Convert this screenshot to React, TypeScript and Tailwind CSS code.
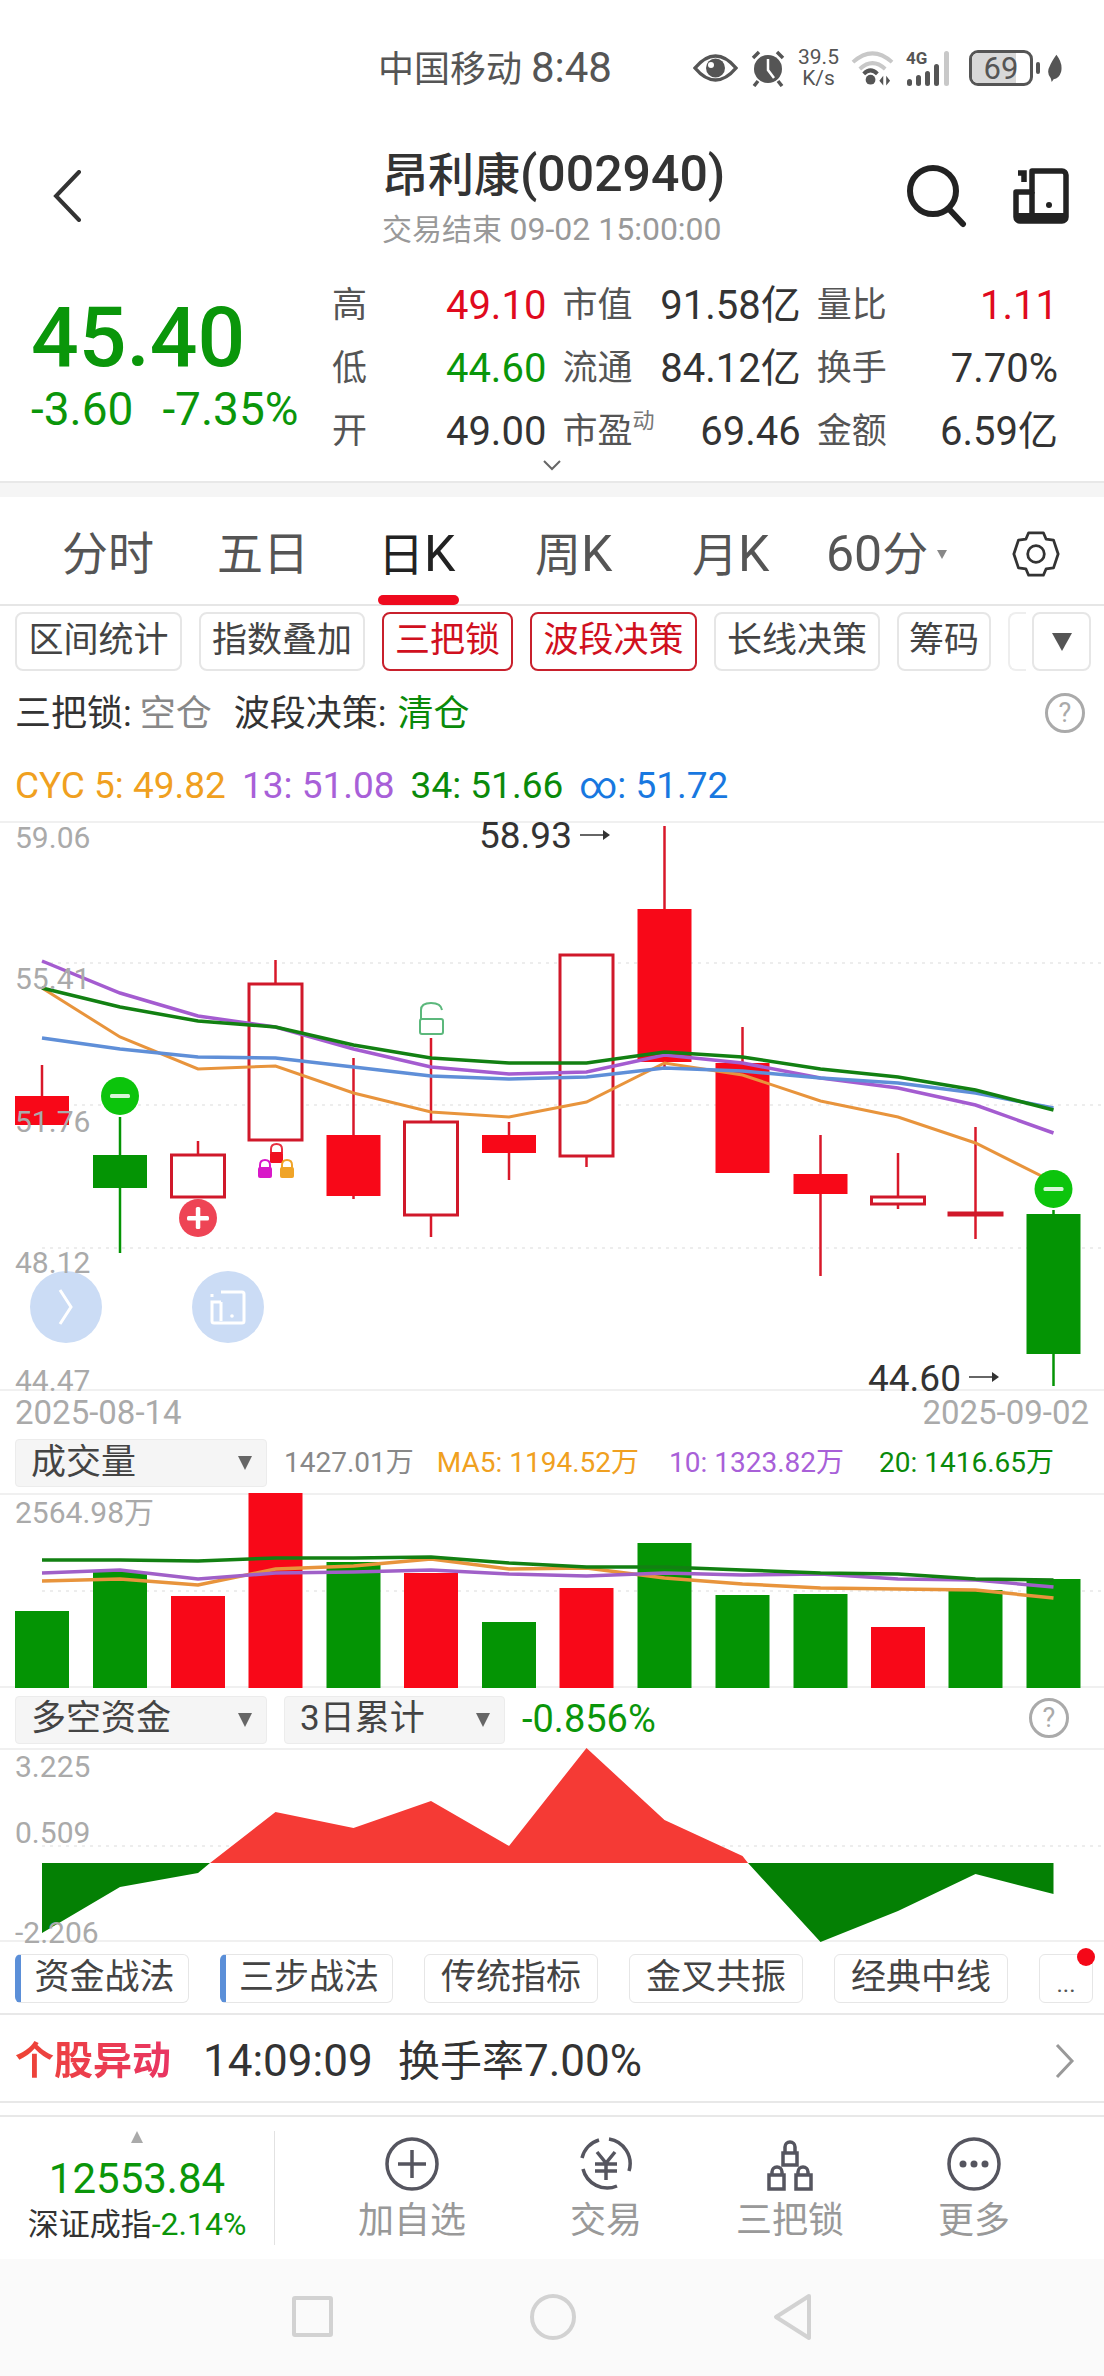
import type { ReactNode } from 'react'

const RED = '#f80818'
const GREEN = '#049404'
const centers = [42, 120, 198, 275.5, 353.5, 431, 509, 586.5, 664.5, 742.5, 820.5, 898, 975.5, 1053.5]

// wick top, body top, body bottom, wick bottom, style
type Candle = [number, number, number, number, 'r' | 'g' | 'h']
const candles: Candle[] = [
  [1065, 1096, 1125, 1125, 'r'],
  [1117, 1155, 1188, 1253, 'g'],
  [1141, 1155, 1197, 1197, 'h'],
  [960, 984, 1140, 1140, 'h'],
  [1058, 1135, 1196, 1199, 'r'],
  [1038, 1122, 1215, 1237, 'h'],
  [1122, 1135, 1153, 1180, 'r'],
  [954, 955, 1156, 1167, 'h'],
  [826, 909, 1062, 1067, 'r'],
  [1027, 1063, 1173, 1173, 'r'],
  [1135, 1174, 1194, 1276, 'r'],
  [1153, 1197, 1204, 1209, 'h'],
  [1127, 1213, 1215, 1239, 'h'],
  [1210, 1214, 1354, 1386, 'g'],
]

const maPurple = [961, 993, 1016, 1027, 1049, 1067, 1074, 1072, 1055, 1063, 1078, 1088, 1105, 1133]
const maGreen = [988, 1007, 1021, 1027, 1045, 1058, 1063, 1063, 1052, 1057, 1069, 1077, 1090, 1110]
const maBlue = [1038, 1049, 1057, 1058, 1067, 1076, 1079, 1077, 1068, 1071, 1078, 1083, 1093, 1108]
const maOrange = [988, 1037, 1069, 1066, 1093, 1112, 1117, 1102, 1063, 1075, 1101, 1117, 1143, 1182]

const volTops = [1611, 1572, 1596, 1493, 1562, 1573, 1622, 1588, 1543, 1595, 1594, 1627, 1590, 1579]
const volColors = 'ggrrgrgrggg' + 'rgg'
const volGreen = [1560, 1560, 1561, 1558, 1558, 1557, 1563, 1567, 1567, 1570, 1573, 1574, 1579, 1580]
const volPurple = [1573, 1570, 1579, 1573, 1572, 1570, 1574, 1576, 1573, 1575, 1574, 1579, 1580, 1587]
const volOrange = [1581, 1579, 1585, 1569, 1566, 1559, 1569, 1568, 1578, 1584, 1588, 1589, 1590, 1598]

const pts = (ys: number[]) => ys.map((y, i) => `${centers[i]},${y}`).join(' ')

function CandleChart() {
  return (
    <svg className="absolute left-0 top-[-2px]" width="1104" height="570" viewBox="0 821 1104 570">
      {[963, 1105, 1248].map((y) => (
        <line key={y} x1="42" x2="1104" y1={y} y2={y} stroke="#e8e8e8" strokeWidth="1.5" strokeDasharray="3 5" />
      ))}
      {candles.map(([wt, bt, bb, wb, kind], i) => {
        const x = centers[i]
        const color = kind === 'g' ? GREEN : kind === 'r' ? RED : '#d0182a'
        return (
          <g key={i}>
            <line x1={x} x2={x} y1={wt} y2={wb} stroke={kind === 'g' ? GREEN : '#d8182a'} strokeWidth="2.5" />
            {kind === 'h' ? (
              <rect x={x - 26.5} y={bt} width="53" height={bb - bt} fill="#fff" stroke={color} strokeWidth="3" />
            ) : (
              <rect x={x - 27} y={bt} width="54" height={bb - bt} fill={color} />
            )}
          </g>
        )
      })}
      <polyline points={pts(maOrange)} fill="none" stroke="#e8943c" strokeWidth="3" />
      <polyline points={pts(maPurple)} fill="none" stroke="#a45cd0" strokeWidth="3.5" />
      <polyline points={pts(maBlue)} fill="none" stroke="#5f8fd8" strokeWidth="3.5" />
      <polyline points={pts(maGreen)} fill="none" stroke="#128012" strokeWidth="3.5" />

      <circle cx="120" cy="1096" r="19" fill="#0cc40c" />
      <rect x="110" y="1094" width="20" height="4" rx="1.5" fill="#d8f5d8" />
      <circle cx="1053.5" cy="1189" r="19" fill="#0cc40c" />
      <rect x="1043.5" y="1187" width="20" height="4" rx="1.5" fill="#d8f5d8" />
      <circle cx="198" cy="1218" r="19" fill="#ee4455" />
      <rect x="187" y="1216" width="22" height="4.5" rx="1.5" fill="#fff" />
      <rect x="195.8" y="1207" width="4.5" height="22" rx="1.5" fill="#fff" />

      <path d="M421 1019v-9q0-7 10-7q10 0 11 7" fill="none" stroke="#5cb87c" strokeWidth="2" />
      <rect x="420" y="1019" width="23" height="15" rx="2" fill="none" stroke="#5cb87c" strokeWidth="2" />
      <path d="M271 1153v-4q0-5 5.500-5q5.500 0 5.500 5v4" fill="none" stroke="#e83040" strokeWidth="2" />
      <rect x="270" y="1152" width="13" height="11" rx="1.5" fill="#f01020" />
      <path d="M260 1168v-3q0-5 5-5q5 0 5 5v3" fill="none" stroke="#d818c8" strokeWidth="2" />
      <rect x="258" y="1167" width="14" height="11" rx="2" fill="#d818c8" />
      <path d="M282 1168v-3q0-5 5-5q5 0 5 5v3" fill="none" stroke="#f0a428" strokeWidth="2" />
      <rect x="280" y="1167" width="14" height="11" rx="2" fill="#f0a428" />

      <path d="M580 835h24" fill="none" stroke="#333" strokeWidth="1.5" />
      <path d="M603 830l7 5l-7 5z" fill="#333" />
      <path d="M969 1377h24" fill="none" stroke="#333" strokeWidth="1.5" />
      <path d="M992 1372l7 5l-7 5z" fill="#333" />

      <circle cx="66" cy="1307" r="36" fill="#cbdcf5" />
      <path d="M60 1290l11 17l-11 17" fill="none" stroke="#fff" strokeWidth="3" />
      <circle cx="228" cy="1307" r="36" fill="#cbdcf5" />
      <path d="M221 1292h21a2 2 0 0 1 2 2v27a2 2 0 0 1-2 2h-28a2 2 0 0 1-2-2v-19h9m0 0v19m-9-27v3" fill="none" stroke="#fff" strokeWidth="3" />
      <circle cx="232" cy="1316" r="1.8" fill="#fff" />
    </svg>
  )
}

function VolumeChart() {
  return (
    <svg className="absolute left-0 top-[-2px]" width="1104" height="195" viewBox="0 1493 1104 195">
      <line x1="42" x2="1104" y1="1591" y2="1591" stroke="#e8e8e8" strokeWidth="1.5" strokeDasharray="3 5" />
      {volTops.map((t, i) => (
        <rect key={i} x={centers[i] - 27} y={t} width="54" height={1688 - t} fill={volColors[i] === 'g' ? GREEN : RED} />
      ))}
      <polyline points={pts(volOrange)} fill="none" stroke="#e8943c" strokeWidth="3.5" />
      <polyline points={pts(volPurple)} fill="none" stroke="#a060c8" strokeWidth="3.5" />
      <polyline points={pts(volGreen)} fill="none" stroke="#128012" strokeWidth="3.5" />
    </svg>
  )
}

function FundChart() {
  const zero = 1863
  const c = centers
  return (
    <svg className="absolute left-0 top-[-2px]" width="1104" height="194" viewBox="0 1748 1104 194">
      <line x1="42" x2="1104" y1="1846" y2="1846" stroke="#e8e8e8" strokeWidth="1.5" strokeDasharray="3 5" />
      <polygon
        fill="#f53a35"
        points={`210,${zero} ${c[3]},1812 ${c[4]},1828 ${c[5]},1801 ${c[6]},1846 ${c[7]},1748 ${c[8]},1820 ${c[9]},1856 748,${zero}`}
      />
      <polygon fill="#048004" points={`${c[0]},${zero} 210,${zero} ${c[2]},1873 ${c[1]},1887 ${c[0]},1933`} />
      <polygon
        fill="#048004"
        points={`748,${zero} ${c[13]},${zero} ${c[13]},1894 ${c[12]},1874 ${c[11]},1911 ${c[10]},1942`}
      />
    </svg>
  )
}

function AxisLabel({ top, children }: { top: number; children: ReactNode }) {
  return (
    <span style={{ top }} className="absolute left-[15px] whitespace-nowrap text-[30px] leading-[34px] text-[#aaaaaa]">
      {children}
    </span>
  )
}

function Caret() {
  return <span className="h-0 w-0 border-x-[7px] border-t-[14px] border-x-transparent border-t-[#666666]" />
}

function Select({ label, width }: { label: string; width: string }) {
  return (
    <div className={`flex h-[48px] items-center justify-between rounded-[4px] border border-[#ececec] bg-[#f5f5f5] pl-[15px] pr-[14px] text-[35px] text-[#444444] ${width}`}>
      <span>{label}</span>
      <Caret />
    </div>
  )
}

function Help({ className }: { className: string }) {
  return (
    <span className={`flex h-[40px] w-[40px] items-center justify-center rounded-full border-[3px] border-[#aaaaaa] text-[27px] leading-none text-[#aaaaaa] ${className}`}>
      ?
    </span>
  )
}

function ToolTag({ label, active, width }: { label: string; active?: boolean; width: string }) {
  return (
    <div
      className={`flex h-[59px] items-center justify-center rounded-[8px] border-2 text-[35px] ${width} ${
        active ? 'border-[#c8202c] text-[#d0101e]' : 'border-[#e6e6e6] text-[#444444]'
      }`}
    >
      {label}
    </div>
  )
}

function FundTag({ label, marked, width }: { label: string; marked?: boolean; width: string }) {
  return (
    <div
      className={`flex h-[49px] items-center justify-center rounded-[6px] border border-[#e6e6e6] text-[35px] text-[#444444] ${width} ${
        marked ? 'border-l-[6px] border-l-[#5b8fd8]' : ''
      }`}
    >
      {label}
    </div>
  )
}

function StatRow({ label, value, valueColor, width }: { label: ReactNode; value: string; valueColor?: string; width: string }) {
  return (
    <div className={`flex items-center justify-between ${width}`}>
      <span className="text-[35px] leading-[44px] text-[#555555]">{label}</span>
      <span className={`text-[40px] leading-[44px] ${valueColor ?? 'text-[#333333]'}`}>{value}</span>
    </div>
  )
}

function StatusIcons() {
  return (
    <div className="flex items-center text-[#555555]">
      <svg width="45" height="30" viewBox="0 0 45 30">
        <path d="M2 15Q12 3 22.5 3T43 15Q33 27 22.5 27T2 15Z" fill="none" stroke="#555" strokeWidth="3.5" />
        <circle cx="22.5" cy="15" r="9.5" fill="#555" />
        <circle cx="18" cy="12" r="3" fill="#fff" />
      </svg>
      <svg width="36" height="38" viewBox="0 0 36 38" className="ml-[12px]">
        <circle cx="18" cy="20" r="14" fill="#555" />
        <path d="M18 10v11l6 8" fill="none" stroke="#fff" strokeWidth="2.5" />
        <path d="M3 9l6-6M33 9l-6-6M8 32l-4 5M28 32l4 5" stroke="#555" strokeWidth="3.5" />
      </svg>
      <div className="ml-[12px] flex w-[41px] flex-col items-center text-[21px] leading-[21px]">
        <span>39.5</span>
        <span>K/s</span>
      </div>
      <svg width="43" height="36" viewBox="0 0 44 36" className="ml-[12px]">
        <path d="M2 12Q22 -6 42 12M9 19Q22 7 35 19" fill="none" stroke="#c8c8c8" strokeWidth="4" />
        <path d="M13 24Q20 17 27 24" fill="none" stroke="#555" strokeWidth="4" />
        <circle cx="20" cy="30" r="5" fill="#555" />
        <path d="M33 26l-4 5l4 5zM36 26l4 5l-4 5z" fill="#555" />
      </svg>
      <div className="relative ml-[12px] h-[38px] w-[50px]">
        <span className="absolute left-0 top-[-1px] text-[17px] font-bold leading-[20px]">4G</span>
        <svg width="50" height="38" viewBox="0 0 50 38" className="absolute inset-0">
          <rect x="1" y="30" width="5" height="7" rx="2.5" fill="#555" />
          <rect x="10" y="26" width="5" height="11" rx="2.5" fill="#555" />
          <rect x="19" y="22" width="5" height="15" rx="2.5" fill="#555" />
          <rect x="28" y="15" width="5" height="22" rx="2.5" fill="#555" />
          <rect x="38" y="2" width="5" height="35" rx="2.5" fill="#c8c8c8" />
        </svg>
      </div>
      <div className="relative ml-[13px] flex h-[36px] w-[64px] items-center justify-center overflow-hidden rounded-[9px] border-[3px] border-[#555555]">
        <span className="absolute inset-y-0 left-0 w-[44px] bg-[#d8d8d8]" />
        <span className="relative text-[31px] leading-none">69</span>
      </div>
      <span className="ml-[3px] h-[12px] w-[4px] rounded-full bg-[#555555]" />
      <svg width="16" height="30" viewBox="0 0 17 30" className="ml-[7px]">
        <path d="M10 1Q17 10 15 19Q13 26 7 27L5 30L4 26Q-1 20 3 13Q5 8 10 1Z" fill="#555" />
      </svg>
    </div>
  )
}

export default function App() {
  return (
    <div className="flex h-[2376px] w-[1104px] flex-col overflow-hidden bg-white text-[#333333] [font-family:Roboto,'Noto_Sans_CJK_SC',sans-serif]">
      {/* status bar */}
      <div className="flex h-[100px] shrink-0 items-center pl-[378px] pr-[41px] pt-[36px]">
        <span className="h-[64px] whitespace-nowrap text-[36px] leading-[64px] text-[#555555]">
          中国移动 <span className="text-[42px]">8:48</span>
        </span>
        <div className="ml-auto"><StatusIcons /></div>
      </div>

      {/* header */}
      <div className="flex h-[160px] shrink-0 items-start pt-[45px]">
        <svg width="30" height="52" viewBox="0 0 30 52" className="ml-[52px] mt-[25px]">
          <path d="M27 2L4 26l23 24" fill="none" stroke="#333" strokeWidth="4" strokeLinecap="round" />
        </svg>
        <div className="ml-[300px] flex w-[342px] flex-col">
          <span className="whitespace-nowrap text-[46px] font-medium leading-[58px] text-[#333333]">
            昂利康<span className="text-[50px]">(002940)</span>
          </span>
          <span className="mt-[5px] whitespace-nowrap text-[30px] leading-[40px] text-[#999999]">
            交易结束 <span className="text-[32px]">09-02 15:00:00</span>
          </span>
        </div>
        <svg width="64" height="64" viewBox="0 0 64 64" className="ml-[181px] mt-[19px]">
          <circle cx="28" cy="27" r="23" fill="none" stroke="#222" strokeWidth="6" />
          <path d="M44 45l14 15" stroke="#222" strokeWidth="6" strokeLinecap="round" />
        </svg>
        <svg width="56" height="56" viewBox="0 0 56 56" className="ml-[44px] mt-[23px]">
          <path d="M19 3h30a4 4 0 0 1 4 4v42a4 4 0 0 1-4 4H7a4 4 0 0 1-4-4V24h16z" fill="none" stroke="#222" strokeWidth="5.5" strokeLinejoin="round" />
          <path d="M19 24v29" stroke="#222" strokeWidth="5.5" />
          <path d="M5 5h6v9" fill="none" stroke="#222" strokeWidth="5.5" />
          <rect x="3" y="45" width="50" height="8" fill="#222" />
          <circle cx="36" cy="37" r="3" fill="#222" />
        </svg>
      </div>

      {/* quote */}
      <div className="relative flex h-[221px] shrink-0">
        <div className="ml-[31px] w-[301px] pt-[28px] text-[#0a960a]">
          <div className="text-[84px] font-medium leading-[100px]">45.40</div>
          <div className="mt-[-4px] whitespace-nowrap text-[46px] leading-[50px]">
            -3.60<span className="ml-[29px]">-7.35%</span>
          </div>
        </div>
        <div className="flex w-[726px] flex-col gap-[19px] pt-[24px]">
          <div className="flex gap-[16px]">
            <StatRow width="w-[215px]" label="高" value="49.10" valueColor="text-[#e00a1e]" />
            <StatRow width="w-[239px]" label="市值" value="91.58亿" />
            <StatRow width="w-[242px]" label="量比" value="1.11" valueColor="text-[#e00a1e]" />
          </div>
          <div className="flex gap-[16px]">
            <StatRow width="w-[215px]" label="低" value="44.60" valueColor="text-[#0a960a]" />
            <StatRow width="w-[239px]" label="流通" value="84.12亿" />
            <StatRow width="w-[242px]" label="换手" value="7.70%" />
          </div>
          <div className="flex gap-[16px]">
            <StatRow width="w-[215px]" label="开" value="49.00" />
            <StatRow
              width="w-[239px]"
              label={
                <span className="flex items-start">
                  市盈<span className="mt-[-2px] text-[22px] leading-[26px] text-[#777777]">动</span>
                </span>
              }
              value="69.46"
            />
            <StatRow width="w-[242px]" label="金额" value="6.59亿" />
          </div>
        </div>
        <svg width="20" height="12" viewBox="0 0 20 12" className="absolute left-[542px] top-[199px]">
          <path d="M2 2l8 8l8-8" fill="none" stroke="#666" strokeWidth="2" />
        </svg>
      </div>
      <div className="h-[16px] shrink-0 border-t-2 border-[#e8e8e8] bg-[#f5f5f5]" />

      {/* period tabs */}
      <div className="flex h-[109px] shrink-0 items-center border-b-2 border-[#e6e6e6] pt-[7px] text-[46px] text-[#555555]">
        <span className="ml-[62px] w-[155px]">分时</span>
        <span className="w-[161px]">五日</span>
        <span className="relative w-[157px] text-[#222222]">
          日<span className="text-[50px]">K</span>
          <span className="absolute left-0 top-[78px] h-[10px] w-[81px] rounded-full bg-[#ee0a1e]" />
        </span>
        <span className="w-[157px]">周<span className="text-[50px]">K</span></span>
        <span className="w-[134px]">月<span className="text-[50px]">K</span></span>
        <span className="flex items-center">
          <span className="text-[50px]">60</span>分
          <span className="ml-[9px] h-0 w-0 border-x-[5px] border-t-[9px] border-x-transparent border-t-[#888888]" />
        </span>
        <svg width="48" height="48" viewBox="0 0 52 52" className="ml-auto mr-[44px]">
          <path d="M18 3h16l3 7l8 1l5 15l-5 15l-8 1l-3 7H18l-3-7l-8-1L2 26l5-15l8-1z" fill="none" stroke="#333" strokeWidth="3" strokeLinejoin="round" />
          <circle cx="26" cy="26" r="9" fill="none" stroke="#333" strokeWidth="3" />
        </svg>
      </div>

      {/* tool tags */}
      <div className="flex h-[74px] shrink-0 items-start pl-[15px] pt-[6px]">
        <div className="flex gap-[17px]">
          <ToolTag width="w-[167px]" label="区间统计" />
          <ToolTag width="w-[166px]" label="指数叠加" />
          <ToolTag width="w-[131px]" label="三把锁" active />
          <ToolTag width="w-[167px]" label="波段决策" active />
          <ToolTag width="w-[166px]" label="长线决策" />
          <ToolTag width="w-[94px]" label="筹码" />
        </div>
        <div className="ml-[17px] h-[59px] w-[18px] rounded-l-[8px] border-2 border-r-0 border-[#eeeeee]" />
        <div className="ml-[6px] flex h-[59px] w-[59px] items-center justify-center rounded-[8px] border-2 border-[#e6e6e6]">
          <span className="h-0 w-0 border-x-[10px] border-t-[18px] border-x-transparent border-t-[#555555]" />
        </div>
      </div>

      {/* signal */}
      <div className="relative flex h-[66px] shrink-0 items-center pt-[2px] pl-[15px] text-[36px] text-[#333333]">
        三把锁: <span className="ml-[8px] text-[#888888]">空仓</span>
        <span className="ml-[22px]">波段决策:</span>
        <span className="ml-[11px] text-[#0a8a0a]">清仓</span>
        <Help className="absolute left-[1045px] top-[13px]" />
      </div>

      {/* ma legend */}
      <div className="flex h-[75px] shrink-0 items-center whitespace-nowrap pl-[15px] pt-[5px] text-[37px]">
        <span className="text-[#f0a020]">CYC 5: 49.82</span>
        <span className="ml-[16px] text-[#a860d8]">13: 51.08</span>
        <span className="ml-[16px] text-[#0a8a0a]">34: 51.66</span>
        <span className="ml-[16px] text-[#1878e0]">∞: 51.72</span>
      </div>

      {/* kline */}
      <div className="relative h-[570px] shrink-0 border-y-2 border-[#f0f0f0]">
        <CandleChart />
        <AxisLabel top={-2}>59.06</AxisLabel>
        <AxisLabel top={139}>55.41</AxisLabel>
        <AxisLabel top={282}>51.76</AxisLabel>
        <AxisLabel top={423}>48.12</AxisLabel>
        <AxisLabel top={541}>44.47</AxisLabel>
        <span className="absolute left-[479px] top-[-8px] text-[37px] leading-[42px] text-[#333333]">58.93</span>
        <span className="absolute left-[868px] top-[535px] text-[37px] leading-[42px] text-[#333333]">44.60</span>
      </div>
      <div className="flex h-[44px] shrink-0 items-center justify-between px-[15px] text-[33px] text-[#aaaaaa]">
        <span>2025-08-14</span>
        <span>2025-09-02</span>
      </div>

      {/* volume */}
      <div className="flex h-[58px] shrink-0 items-center whitespace-nowrap pb-[2px] pl-[15px] text-[28px]">
        <Select width="w-[252px]" label="成交量" />
        <span className="ml-[17px] text-[#888888]">1427.01万</span>
        <span className="ml-[23px] text-[#f0a020]">MA5: 1194.52万</span>
        <span className="ml-[30px] text-[#a860d8]">10: 1323.82万</span>
        <span className="ml-[35px] text-[#0a8a0a]">20: 1416.65万</span>
      </div>
      <div className="relative h-[195px] shrink-0 border-y-2 border-[#f0f0f0]">
        <VolumeChart />
        <AxisLabel top={1}>2564.98万</AxisLabel>
      </div>

      {/* fund flow */}
      <div className="relative flex h-[60px] shrink-0 items-center gap-[17px] pl-[15px] pt-[3px]">
        <Select width="w-[252px]" label="多空资金" />
        <Select width="w-[221px]" label="3日累计" />
        <span className="text-[38px] text-[#0a960a]">-0.856%</span>
        <Help className="absolute left-[1029px] top-[10px]" />
      </div>
      <div className="relative h-[194px] shrink-0 border-y-2 border-[#f0f0f0]">
        <FundChart />
        <AxisLabel top={0}>3.225</AxisLabel>
        <AxisLabel top={66}>0.509</AxisLabel>
        <AxisLabel top={166}>-2.206</AxisLabel>
      </div>
      <div className="relative flex h-[73px] shrink-0 gap-[31px] border-b-2 border-[#e8e8e8] pl-[15px] pt-[12px]">
        <FundTag width="w-[174px]" label="资金战法" marked />
        <FundTag width="w-[173px]" label="三步战法" marked />
        <FundTag width="w-[174px]" label="传统指标" />
        <FundTag width="w-[174px]" label="金叉共振" />
        <FundTag width="w-[174px]" label="经典中线" />
        <div className="flex h-[49px] w-[54px] items-end justify-center rounded-[6px] border border-[#e6e6e6] pb-[6px] text-[24px] leading-none text-[#555555]">...</div>
        <span className="absolute left-[1077px] top-[6px] h-[18px] w-[18px] rounded-full bg-[#f40818]" />
      </div>

      {/* alert */}
      <div className="flex h-[88px] shrink-0 items-center whitespace-nowrap border-b-2 border-[#e8e8e8] pl-[15px] pt-[6px] text-[42px] text-[#333333]">
        <span className="w-[188px] bg-gradient-to-r from-[#ee4433] to-[#e8306a] bg-clip-text text-[39px] font-bold text-transparent">个股异动</span>
        <span className="w-[195px] text-[44px]">14:09:09</span>
        <span>换手率<span className="text-[44px]">7.00%</span></span>
        <svg width="22" height="36" viewBox="0 0 22 36" className="ml-auto mr-[28px]">
          <path d="M3 2l15 16L3 34" fill="none" stroke="#999" strokeWidth="3" />
        </svg>
      </div>
      <div className="h-[14px] shrink-0 border-b-2 border-[#e8e8e8]" />

      {/* bottom bar */}
      <div className="flex h-[142px] shrink-0 items-stretch">
        <div className="my-[14px] flex w-[275px] flex-col items-center whitespace-nowrap border-r border-[#e2e2e2]">
          <span className="h-0 w-0 border-x-[6px] border-b-[12px] border-x-transparent border-b-[#aaaaaa]" />
          <span className="mt-[10px] text-[42px] leading-[52px] text-[#0a960a]">12553.84</span>
          <span className="mt-[-1px] text-[31px] leading-[40px] text-[#333333]">
            深证成指<span className="text-[32px] text-[#0a960a]">-2.14%</span>
          </span>
        </div>
        <NavItem className="ml-[83px]" label="加自选">
          <circle cx="27" cy="27" r="25" fill="none" stroke="#55555f" strokeWidth="3.5" />
          <path d="M27 13v28M13 27h28" stroke="#55555f" strokeWidth="3.5" />
        </NavItem>
        <NavItem className="ml-[86px]" label="交易">
          <path d="M30 2A25 25 0 0 1 50 34M38 49A25 25 0 0 1 4 32M3 21A25 25 0 0 1 20 3" fill="none" stroke="#55555f" strokeWidth="3.5" />
          <path d="M18 15l9 11l9-11M16 27h22M16 34h22M27 26v17" fill="none" stroke="#55555f" strokeWidth="3.5" />
        </NavItem>
        <NavItem className="ml-[76px]" label="三把锁">
          <path d="M22 16v-6a5 5 0 0 1 10 0v6M20 16h14v12H20zM9 38v-3a5 5 0 0 1 10 0v3M35 38v-3a5 5 0 0 1 10 0v3M6 38h15v14H6zM33 38h15v14H33z" fill="none" stroke="#55555f" strokeWidth="3.5" />
        </NavItem>
        <NavItem className="ml-[76px]" label="更多">
          <circle cx="27" cy="27" r="25" fill="none" stroke="#55555f" strokeWidth="3.5" />
          <circle cx="16" cy="27" r="3.5" fill="#55555f" />
          <circle cx="27" cy="27" r="3.5" fill="#55555f" />
          <circle cx="38" cy="27" r="3.5" fill="#55555f" />
        </NavItem>
      </div>

      {/* system nav */}
      <div className="flex flex-1 items-center bg-[#fafafa] pb-[2px]">
        <span className="ml-[292px] h-[41px] w-[41px] rounded-[3px] border-[4px] border-[#d2d2d2]" />
        <span className="ml-[197px] h-[46px] w-[46px] rounded-full border-[4px] border-[#d2d2d2]" />
        <svg width="44" height="48" viewBox="0 0 44 48" className="ml-[195px]">
          <path d="M38 3L5 24l33 21z" fill="none" stroke="#d2d2d2" strokeWidth="4" strokeLinejoin="round" />
        </svg>
      </div>
    </div>
  )
}

function NavItem({ label, className, children }: { label: string; className: string; children: ReactNode }) {
  return (
    <div className={`flex w-[108px] flex-col items-center pt-[20px] ${className}`}>
      <svg width="54" height="54" viewBox="0 0 54 54">{children}</svg>
      <span className="mt-[7px] whitespace-nowrap text-[36px] leading-[46px] text-[#999999]">{label}</span>
    </div>
  )
}
